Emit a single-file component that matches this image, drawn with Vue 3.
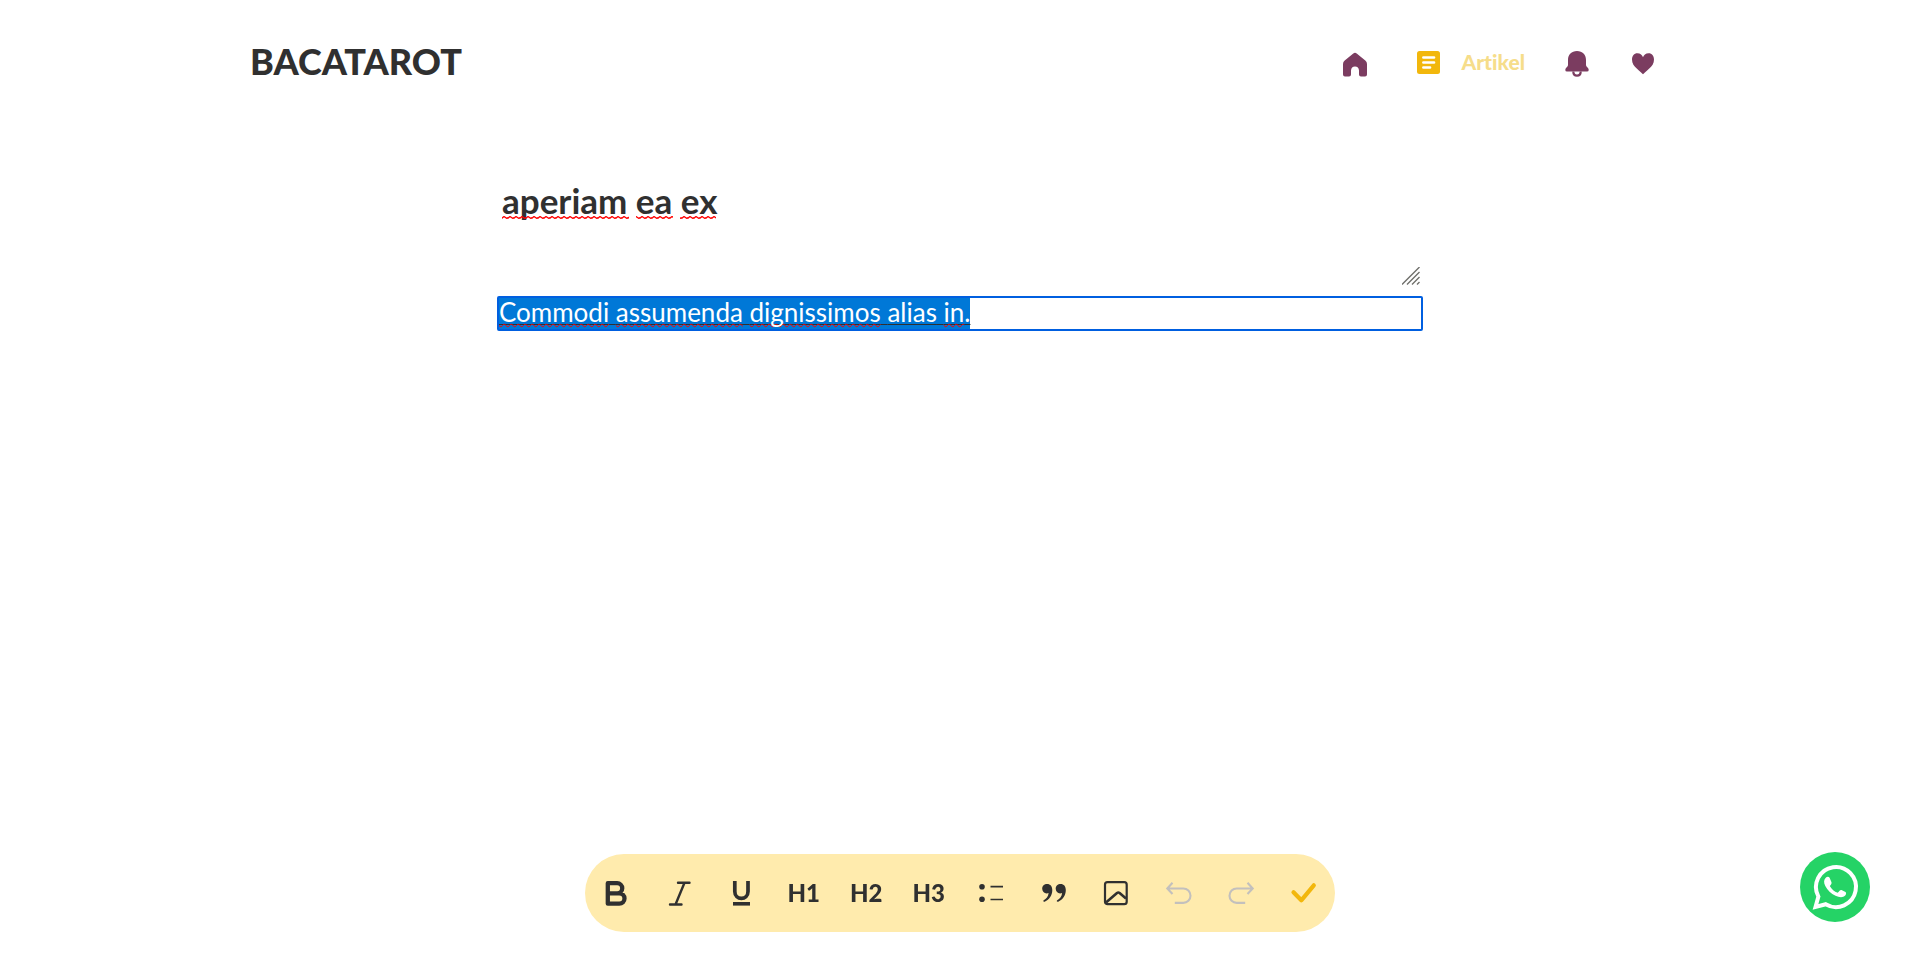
<script setup>
import { ref } from 'vue'

const title = ref('aperiam ea ex')
const body = ['Commodi', 'assumenda', 'dignissimos', 'alias', 'in']
const flagged = ['Commodi', 'assumenda', 'dignissimos', 'in']
const headings = ['H1', 'H2', 'H3']
</script>

<template>
  <header class="header">
    <a class="logo" href="#">BACATAROT</a>
    <nav class="nav" aria-label="Main">
      <a href="#" aria-label="Home">
        <svg class="icon" viewBox="0 0 28 28"><path fill="#7b3c60" d="M12.3 5.4Q14 4.3 15.7 5.4L24.3 12.4Q26 13.8 26 16V26.5Q26 28.5 24 28.5H20Q18 28.5 18 26.5V22.5Q17.7 18.4 14 18.4Q10.3 18.4 10 22.5V26.5Q10 28.5 8 28.5H4Q2 28.5 2 26.5V16Q2 13.8 3.7 12.4Z" /></svg>
      </a>
      <a class="active" href="#" aria-current="page">
        <svg class="icon" viewBox="0 0 28 28"><rect x="2" y="3" width="23" height="23" rx="2.5" fill="#f2b70c" /><path d="M8.4 9.5H19M8.4 14.5H19M8.4 19.5H15" fill="none" stroke="#fff" stroke-width="2.7" stroke-linecap="round" /></svg>
        <span>Artikel</span>
      </a>
      <a href="#" aria-label="Notifications">
        <svg class="icon" viewBox="0 0 28 28"><path fill="#7b3c60" d="M14 3C8.5 3 5 6.5 5 12V17Q5 18 4 19L3 20Q2.300 21 2.300 22Q2.300 23.500 4 23.500H24Q25.700 23.500 25.700 22Q25.700 21 25 20L24 19Q23 18 23 17V12C23 6.500 19.500 3 14 3Z" /><path d="M10.300 23.500C10.300 29 17.700 29 17.700 23.500" fill="none" stroke="#7b3c60" stroke-width="2.200" /></svg>
      </a>
      <a href="#" aria-label="Favorites">
        <svg class="icon" viewBox="0 0 28 28"><path fill="#7b3c60" d="M14 26.200Q12.700 24.800 8 20.700C5 18.200 3 15.500 3 11.500C3 7.700 5.200 5.200 8.300 5.200C11.500 5.200 13.200 7 14 9.200C14.800 7 16.500 5.200 19.700 5.200C22.800 5.200 25 7.700 25 11.500C25 15.500 23 18.200 20 20.700Q15.300 24.800 14 26.200Z" /></svg>
      </a>
    </nav>
  </header>

  <main class="editor">
    <div class="title-field">
      <textarea v-model="title" class="title" aria-label="Title" spellcheck="false"></textarea>
      <svg class="waves" aria-hidden="true">
        <defs>
          <pattern id="wave" width="6" height="3" patternUnits="userSpaceOnUse">
            <path d="M-1 3L2 .5L5 2.500L8 0" fill="none" stroke="#f00" stroke-width="1.300" />
          </pattern>
        </defs>
        <rect width="127" height="3" fill="url(#wave)" />
        <rect x="134" width="37" height="3" fill="url(#wave)" />
        <rect x="178" width="36" height="3" fill="url(#wave)" />
      </svg>
      <svg class="grip" viewBox="0 0 18 18" aria-hidden="true"><path d="M0 17.500L17.500 0M5 17.500L17.500 5M10 17.500L17.500 10M15 17.500L17.500 15" fill="none" stroke="#70706c" stroke-width="1.400" /></svg>
    </div>
    <div class="content" contenteditable="true" role="textbox" aria-multiline="true" aria-label="Article body" spellcheck="false"><span class="selected"><template v-for="(word, i) in body" :key="word"><span :class="{ misspelled: flagged.includes(word) }">{{ word }}</span>{{ i < body.length - 1 ? ' ' : '.' }}</template></span></div>
  </main>

  <div class="toolbar" role="toolbar" aria-label="Formatting">
    <button type="button" aria-label="Bold">
      <svg class="icon" viewBox="0 0 28 28"><path d="M5.800 4.200H15.200A5 5 0 0 1 15.200 14.300H5.800ZM5.800 14.300H17.300A5.200 5.200 0 0 1 17.300 24.700H5.800Z" fill="none" stroke="#303030" stroke-width="4.300" stroke-linejoin="round" /></svg>
    </button>
    <button type="button" aria-label="Italic">
      <svg class="icon" viewBox="0 0 28 28"><path d="M13 3.700H24.500M5 25.500H16.500M19.500 3.700L10.500 25.500" fill="none" stroke="#303030" stroke-width="2.400" stroke-linecap="round" /></svg>
    </button>
    <button type="button" aria-label="Underline">
      <svg class="icon" viewBox="0 0 28 28"><path d="M7.800 2V12.500C7.800 21.700 21 21.700 21 12.500V2" fill="none" stroke="#303030" stroke-width="3.700" /><path d="M6 24.800H23" stroke="#303030" stroke-width="3.600" /></svg>
    </button>
    <button v-for="h in headings" :key="h" type="button">{{ h }}</button>
    <button type="button" aria-label="Bullet list">
      <svg class="icon" viewBox="0 0 28 28"><g fill="#303030"><circle cx="5" cy="7.700" r="2.800" /><circle cx="5" cy="20.300" r="2.800" /></g><path d="M13.500 7.700H26M13.500 20.500H26" stroke="#303030" stroke-width="1.700" /></svg>
    </button>
    <button type="button" aria-label="Quote">
      <svg class="icon" viewBox="0 0 28 28"><g fill="#303030"><path d="M7.200 5C4.200 5 2.200 7 2.200 9.800C2.200 12.500 4.200 14.400 6.600 14.400C7.400 14.400 8 14.200 8.600 13.900C8.300 17.300 6.200 19.800 3.700 21.300C2.700 22 3.500 23.200 4.700 22.700C9.400 20.500 12.300 16.300 12.300 11C12.300 7.300 10.300 5 7.200 5Z" /><path d="M20.700 5C17.700 5 15.700 7 15.700 9.800C15.700 12.500 17.700 14.400 20.100 14.400C20.900 14.400 21.500 14.200 22.100 13.900C21.800 17.300 19.700 19.800 17.200 21.300C16.200 22 17 23.200 18.200 22.700C22.900 20.500 25.800 16.300 25.800 11C25.800 7.300 23.800 5 20.700 5Z" /></g></svg>
    </button>
    <button type="button" aria-label="Insert image">
      <svg class="icon" viewBox="0 0 28 28"><g fill="none" stroke="#303030" stroke-width="2.200" stroke-linejoin="round"><rect x="3" y="3.200" width="21.700" height="22" rx="2.500" /><path d="M4 23.500L15 14Q16.300 13 17.600 14L24 19.500" stroke-width="2.600" /></g></svg>
    </button>
    <button type="button" aria-label="Undo" disabled>
      <svg class="icon" viewBox="0 0 28 28"><path d="M7.500 3.800L2.300 9.500L7.500 15M2.300 9.500H18.300A7.200 7.200 0 0 1 18.300 23.900H9.800" fill="none" stroke="#c3c0bd" stroke-width="2.100" /></svg>
    </button>
    <button type="button" aria-label="Redo" disabled>
      <svg class="icon" viewBox="0 0 28 28"><path d="M20.500 3.800L25.700 9.500L20.500 15M25.700 9.500H9.700A7.200 7.200 0 0 0 9.700 23.900H18.200" fill="none" stroke="#c3c0bd" stroke-width="2.100" /></svg>
    </button>
    <button type="button" aria-label="Save">
      <svg class="icon" viewBox="0 0 28 28"><path d="M3.500 13.200L11.300 21.300L23.800 6.300" fill="none" stroke="#f2b70c" stroke-width="4.200" stroke-linecap="round" stroke-linejoin="round" /></svg>
    </button>
  </div>

  <a class="whatsapp" href="#" aria-label="WhatsApp">
    <svg viewBox="0 0 70 70"><circle cx="35" cy="35" r="35" fill="#25d366" /><path d="M15.500 55L18.400 44.600A20 20 0 1 1 25.700 52.200Z" fill="none" stroke="#fff" stroke-width="4" stroke-linejoin="miter" /><path fill="#fff" d="M26 25.500C27 24.500 29 24.500 29.600 25.800L31.500 30.200C32 31.600 30.700 32.800 29.800 34C31.700 37.400 34.300 39.500 37.700 40.800C39 39.600 40 37.500 41.500 38L45.500 40C46.600 40.600 46 42.600 45.200 43.500C42.800 46 39.300 45.500 35.500 43.800C31 41.800 27.500 38 25.300 34C23.500 30.700 23.700 27.600 26 25.500Z" /></svg>
  </a>
</template>

<style scoped>
.header {
  box-sizing: border-box;
  display: flex;
  align-items: center;
  justify-content: space-between;
  max-width: 1440px;
  height: 124px;
  margin: 0 auto;
  padding: 0 23px 0 10px;
}

.logo {
  padding-bottom: 2px;
  color: #303030;
  font-size: 36px;
  font-weight: 900;
  text-decoration: none;
}

.nav {
  display: flex;
  align-items: center;
  gap: 38px;
}

.nav a {
  display: flex;
  align-items: center;
  gap: 18px;
  text-decoration: none;
}

.nav .active {
  padding-left: 8px;
  color: #f6dd8a;
  font-size: 21px;
  font-variant-ligatures: none;
  font-weight: 900;
}

.active span {
  padding-bottom: 2px;
}

.icon {
  display: block;
  width: 28px;
  height: 28px;
  overflow: visible;
}

.editor {
  max-width: 926px;
  margin: 0 auto;
  padding-top: 46px;
}

.title-field {
  position: relative;
  height: 126px;
}

.title {
  box-sizing: border-box;
  display: block;
  width: 100%;
  height: 116px;
  padding: 8px 5px;
  border: 0;
  outline: 0;
  background: transparent;
  color: #303030;
  font: 700 35px/44px Lato, sans-serif;
  resize: none;
}

.waves {
  position: absolute;
  top: 46px;
  left: 5px;
  width: 214px;
  height: 3px;
  pointer-events: none;
}

.grip {
  position: absolute;
  top: 97px;
  right: 3px;
  width: 18px;
  height: 18px;
  pointer-events: none;
}

.content {
  box-sizing: border-box;
  height: 35px;
  border: 2px solid #005fe0;
  border-radius: 2px;
  font-size: 26px;
  line-height: 29px;
}

.selected {
  display: inline-block;
  padding-bottom: 2px;
  background: #0078d7;
  color: #fff;
  text-decoration: underline #303030 1px;
  text-underline-offset: 2px;
  text-decoration-skip-ink: none;
}

.misspelled {
  text-decoration: underline wavy #f00 1px;
  text-underline-offset: 1px;
  text-decoration-skip-ink: none;
}

.toolbar {
  position: fixed;
  bottom: 40px;
  left: 50%;
  display: grid;
  grid-template-columns: repeat(12, 1fr);
  width: 750px;
  height: 78px;
  border-radius: 39px;
  background: #ffebad;
  transform: translateX(-50%);
}

.toolbar button {
  display: flex;
  align-items: center;
  justify-content: center;
  padding: 0;
  border: 0;
  background: transparent;
  color: #303030;
  font: 900 24px/28px Lato, sans-serif;
}

.whatsapp {
  position: fixed;
  right: 50px;
  bottom: 50px;
  width: 70px;
  height: 70px;
}
</style>

<style>
body {
  background: #fff;
  font-family: Lato, sans-serif;
}
</style>
